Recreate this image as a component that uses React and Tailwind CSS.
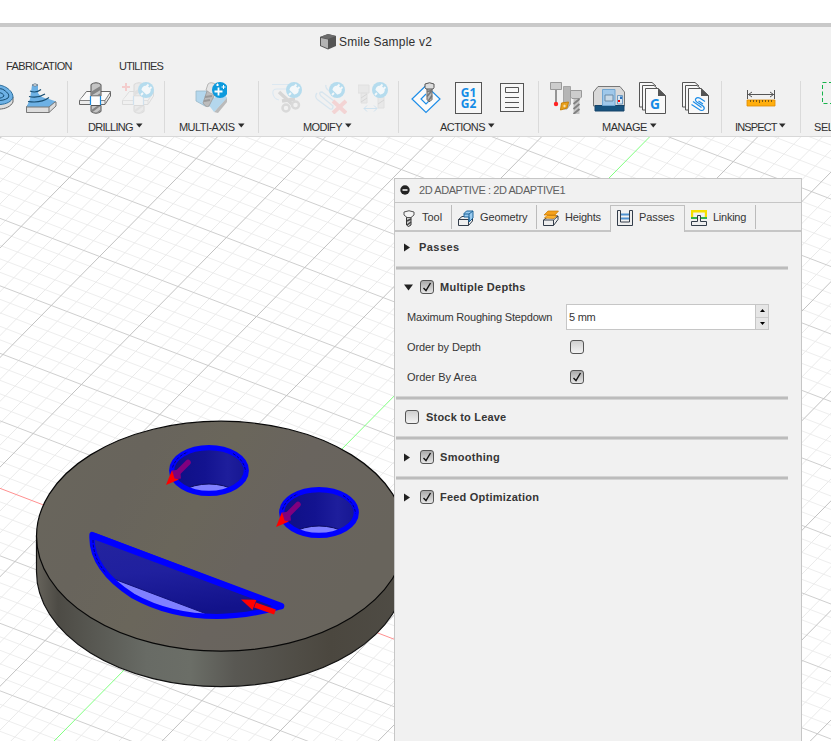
import React from 'react';

const range = (a, b) => Array.from({ length: b - a + 1 }, (_, i) => a + i);
const O = [220.1, 572.6];
const A = [78.43, 30.03];
const B = [-48.3, 49];

function GridLine({ at, along, across, stroke }) {
  const px = O[0] + across[0] * at;
  const py = O[1] + across[1] * at;
  return (
    <line x1={px - along[0] * 14} y1={py - along[1] * 14} x2={px + along[0] * 14} y2={py + along[1] * 14} stroke={stroke} strokeWidth="1" />
  );
}

function Eye({ x, y, id }) {
  return (
    <g transform={`translate(${x} ${y})`}>
      <clipPath id={id}><ellipse rx="37.5" ry="23" /></clipPath>
      <ellipse rx="37.5" ry="23" fill="url(#hole)" />
      <g clipPath={`url(#${id})`}>
        <ellipse cy="36.5" rx="37.5" ry="23" fill="#8080ff" stroke="#0b0b60" strokeWidth="1" />
      </g>
      <ellipse rx="37.3" ry="22.9" fill="none" stroke="#0000ff" strokeWidth="5.2" />
      <path d="M-36.5 -3C-34-11-28-16-21-18.5M24-17C32-12 36-6 36.500 1" fill="none" stroke="#000060" strokeWidth=".8" strokeDasharray="3 1.500" />
      <path d="M-21-8L-33 4" stroke="#80007f" strokeWidth="5.500" strokeLinecap="round" />
      <path d="M-37 0L-29-1L-28 8L-35 9Z" fill="#80007f" />
      <path d="M-43 14.500L-37-.5L-34.500 8L-30 9Z" fill="#ff0000" />
    </g>
  );
}

const MOUTH = 'M92 534.500C90.500 560 108 580 133 596C160 611 190 616.500 217 616.500C243 616.500 263 612 281.500 606.500Z';

function Scene() {
  return (
    <svg className="absolute inset-0" width="831" height="604" viewBox="0 137 831 604">
      <defs>
        <linearGradient id="side" gradientUnits="userSpaceOnUse" x1="36" y1="0" x2="404" y2="0">
          <stop offset="0" stopColor="#67645c" /><stop offset=".06" stopColor="#4d4b45" />
          <stop offset=".15" stopColor="#575751" /><stop offset=".3" stopColor="#686b65" />
          <stop offset=".42" stopColor="#6b6e67" /><stop offset=".54" stopColor="#595853" />
          <stop offset=".8" stopColor="#4b473f" /><stop offset="1" stopColor="#4f4c45" />
        </linearGradient>
        <linearGradient id="top" x1="0" y1="0" x2="1" y2=".35">
          <stop offset="0" stopColor="#69665c" /><stop offset=".3" stopColor="#68645c" />
          <stop offset=".5" stopColor="#6a665b" /><stop offset=".7" stopColor="#69645e" /><stop offset="1" stopColor="#68645c" />
        </linearGradient>
        <linearGradient id="hole"><stop offset="0" stopColor="#0f0f85" /><stop offset=".45" stopColor="#131390" /><stop offset=".75" stopColor="#1e1e9c" /><stop offset="1" stopColor="#161692" /></linearGradient>
        <linearGradient id="smile" x1="0" y1="0" x2=".2" y2="1"><stop offset="0" stopColor="#24249f" /><stop offset=".5" stopColor="#20209e" /><stop offset="1" stopColor="#12128a" /></linearGradient>
        <clipPath id="mouth"><path d={MOUTH} /></clipPath>
      </defs>
      <rect y="137" width="831" height="604" fill="#fff" />
      {range(-65, 65).filter((i) => i % 5).map((i) => <GridLine key={i} at={i / 5} along={A} across={B} stroke="#eeeeee" />)}
      {range(-65, 65).filter((i) => i % 5).map((i) => <GridLine key={i} at={i / 5} along={B} across={A} stroke="#eaeaea" />)}
      {range(-13, 13).map((i) => <GridLine key={i} at={i} along={A} across={B} stroke={i ? '#cfcfcf' : '#ff9090'} />)}
      {range(-13, 13).map((i) => <GridLine key={i} at={i} along={B} across={A} stroke={i ? '#c2c2c2' : '#80ff80'} />)}
      <path d="M36.500 536.200V571.700A184.500 115 0 0 0 405.500 571.700V536.200Z" fill="url(#side)" stroke="#111" strokeWidth="1.200" />
      <ellipse cx="221" cy="536.200" rx="184.500" ry="115" fill="url(#top)" stroke="#080808" strokeWidth="1.200" />
      <Eye id="eyeA" x={209} y={470.500} />
      <Eye id="eyeB" x={319} y={512.500} />
      <path d={MOUTH} fill="url(#smile)" />
      <path d="M110 577.500L212 616V640H90Z" clipPath="url(#mouth)" fill="#8080ff" stroke="#10107a" />
      <path d={MOUTH} fill="none" stroke="#0000ff" strokeWidth="5.200" strokeLinejoin="round" />
      <path d="M94 536L281 606" stroke="#0000ff" strokeWidth="6.500" strokeLinecap="round" />
      <path d="M93 540C93 553 98 564 106 573" fill="none" stroke="#000060" strokeWidth=".8" strokeDasharray="3 1.500" />
      <path d="M241 599.500L256.500 599.800L252.500 610Z" fill="#ff0000" />
      <path d="M255 605L275 612" stroke="#ff0000" strokeWidth="5.500" />
    </svg>
  );
}

const Icon = ({ children, faded }) => (
  <svg className={faded ? 'block shrink-0 opacity-15' : 'block shrink-0'} width="32" height="32" viewBox="0 0 32 32" fill="none">{children}</svg>
);

const Plug = ({ x, y }) => (
  <g transform={`translate(${x} ${y})`}>
    <circle r="8" fill="#b5dcee" />
    <path d="M-5 5L-3 3M-3.500-.5L.5 3.500C3 3 4.500 1 3.500-.8L1-3.500C-1-4-3-2.500-3.500-.5ZM0-3L2.500-5.500M3-.5L5.500-3" fill="#f4f8fa" stroke="#f4f8fa" strokeWidth="1.900" />
  </g>
);

const Screw = ({ x = 0, y = 0, w = 8, h = 24 }) => (
  <g transform={`translate(${x} ${y})`}>
    <path d={`M1 6H${w - 1}V${h - 2}L${w - 3} ${h}H3L1 ${h - 2}Z`} fill="#bbb" stroke="#666" />
    <path d={`M1 ${h - 10}L${w - 1} 8M1 ${h - 5}L${w - 1} ${h - 11}M2 ${h}L${w - 1} ${h - 6}`} stroke="#777" strokeWidth="1.500" />
    <path d={`M-1 1.500Q${w / 2}-1 ${w + 1} 1.500V5L${w} 6.500H0L-1 5Z`} fill="#ddd" stroke="#555" />
  </g>
);

const PocketIcon = () => (
  <Icon>
    <path d="M2 15V20C8 30 27 29 31 20V15Z" fill="#ddd" stroke="#666" />
    <path d="M1 15C3 5 12 2 17 3C25 4 31 10 31 15C29 24 8 26 1 15Z" fill="#6db1e5" stroke="#2c6f9e" />
    <path d="M6 14C9 7 18 5 22 8C26 11 28 13 26 16C20 20 10 19 6 14ZM11 14C14 9 21 10 22 14C19 17 14 17 11 14Z" stroke="#164c70" />
  </Icon>
);
const SteepIcon = () => (
  <Icon>
    <path d="M1.500 24.500L7 20H31V24L24 30.500H1.500Z" fill="#ddd" stroke="#777" />
    <path d="M2 24L5 17L7 3Q10 .5 13 3V11Q16 16 24 17L31 19.500L24 25H2Z" fill="#6db1e5" />
    <path d="M7 3Q10 .5 13 3Q10 5.500 7 3Z" fill="#e8eef2" stroke="#567" strokeWidth=".7" />
    <path d="M5 9Q11 11.500 16 7.500M4 14.500Q13 16.500 20 12M3 19.500Q16 21.500 24 15.500" stroke="#164c70" strokeWidth="1.100" />
    <path d="M1.500 25H24V30.500M24 25L30.500 19.500" stroke="#777" />
  </Icon>
);
const DrillShape = () => (
  <>
    <path d="M7.500 9.500H31.500V14L26 22.500H.5V18.500Z" fill="#ececec" stroke="#666" />
    <path d="M8 10H31L25.500 18H1Z" fill="#fafafa" />
    <path d="M.5 18.500H26L31.500 10M26 18.500V22" stroke="#777" strokeWidth=".9" />
    <path d="M12 2.500Q17-1 22 2.500V14H12Z" fill="#c4c4c4" stroke="#555" />
    <path d="M12.500 9.500L21.500 4V8L12.500 13.500ZM17 14L21.500 11V14Z" fill="#858585" />
    <path d="M12 14.500H22V23H12Z" fill="#fff" />
    <path d="M11.500 14V23M21.500 14V23" stroke="#1a8be0" strokeWidth="1.200" />
    <path d="M12 23.500H22V29.500Q17 33 12 29.500Z" fill="#c4c4c4" stroke="#555" />
    <path d="M12.500 28L18 24H21.500L13 30.500ZM17 31L21.500 27.500V29.500Z" fill="#858585" />
  </>
);
const MultiAxisIcon = () => (
  <Icon>
    <path d="M1 9H13L20 18V24H10L1 19Z" fill="#b4d7ed" stroke="#9bb9c9" strokeWidth=".8" />
    <path d="M19 30L32 15V20L23 31Z" fill="#bbb" /><path d="M13 22L27 8L32 16L19 30Z" fill="#b4d7ed" />
    <path d="M12 9L20 12L14 24Q11 26 8 21Z" fill="#bcbcbc" stroke="#999" strokeWidth=".8" />
    <path d="M10 15L17 14M9 19L15 18" stroke="#999" strokeWidth="2" />
    <path d="M13 2Q16-1 22 3L20 13L15 11L11 8Z" fill="#e4e4e4" stroke="#aaa" strokeWidth=".8" />
    <circle cx="25" cy="8" r="8" fill="#0c9add" />
    <path d="M23.500 5.500V13.500M19.500 9.500H27.500" stroke="#fff" strokeWidth="1.800" />
    <path d="M28.500 3V7M26.500 5H30.500M22.500 1.500V4M21 3H24" stroke="#fff" />
  </Icon>
);
const TrimIcon = () => (
  <Icon>
    <path d="M0 2.500H16M16 7H5Q0 7 1 12T7 18" stroke="#dce8f1" strokeWidth="1.200" />
    <path d="M7 10L20 22M10 19L23 17" stroke="#d6d6d6" strokeWidth="3.500" />
    <circle cx="14" cy="26" r="3.500" stroke="#d9d9d9" strokeWidth="2.500" /><circle cx="23.500" cy="23" r="3.500" stroke="#d9d9d9" strokeWidth="2.500" />
    <Plug x={22} y={8} />
  </Icon>
);
const DeletePassIcon = () => (
  <Icon>
    <path d="M11 3Q10 6 14 9L18 13M2 11Q-1 15 3 18L15 27Q18 28 18 24L6 14Q3 10 7 10L19 19" stroke="#d8e5ee" strokeWidth="1.300" />
    <path d="M18 19L31 31M31 19L18 31" stroke="#f3d4d4" strokeWidth="4" />
    <Plug x={22} y={8} />
  </Icon>
);
const ReplaceToolIcon = () => (
  <Icon>
    <path d="M0 3H11V11H0ZM3 11H9V21H3ZM20 15H26V26H20Z" fill="#e8e8e8" stroke="#e0e0e0" />
    <path d="M3 16L9 12M3 20L9 16M20 22L26 18" stroke="#d6d6d6" />
    <path d="M6 26.500H19M9 23.500L6 26.500L9 29.500M16 23.500L19 26.500L16 29.500" stroke="#cfe2ef" />
    <Plug x={22} y={8} />
  </Icon>
);
const SimulateIcon = () => (
  <Icon>
    <path d="M16 3.500L2 17L16 30.500L30 17Z" stroke="#1d8de8" strokeWidth="1.200" fill="#fafafa" />
    <path d="M16 12L11 17L16 22L21 17" stroke="#1d8de8" strokeWidth="1.200" />
    <Screw x={16} y={.5} w={7} h={19} />
  </Icon>
);
const PostIcon = () => (
  <Icon>
    <rect x="2.500" y=".5" width="26" height="31" fill="#f7f7f7" stroke="#555" />
    <text x="15.500" y="15" textAnchor="middle" className="fill-[#148be6] font-['Noto_Sans',sans-serif] text-[12px] font-bold" textLength="15.500" lengthAdjust="spacingAndGlyphs">G1</text>
    <text x="15.500" y="26" textAnchor="middle" className="fill-[#148be6] font-['Noto_Sans',sans-serif] text-[12px] font-bold" textLength="15.500" lengthAdjust="spacingAndGlyphs">G2</text>
  </Icon>
);
const SetupSheetIcon = () => (
  <Icon>
    <rect x="4.500" y="1.500" width="23" height="28" fill="#f7f7f7" stroke="#555" />
    <path d="M9.500 5.500H22.500V10.500H9.500ZM9 15.500H23M9 20.500H23M9 25.500H23" stroke="#555" />
  </Icon>
);
const ToolLibraryIcon = () => (
  <Icon>
    <path d="M13.500 4.500H20.500V22L17 27H13.500Z" fill="#b5b5b5" stroke="#a5a5a5" />
    <path d="M.5 .5H11.500V7.500H.5Z" fill="#ccc" stroke="#999" /><path d="M6 8V20" stroke="#777" strokeWidth="1.500" /><circle cx="6" cy="22" r="2.200" fill="#f22" />
    <path d="M11.500 21L18.500 20L17 26L10.500 28Z" fill="#e9a11e" stroke="#c9820a" /><path d="M13 24L14.500 22.500L16 24L14.500 25.500Z" fill="#f6dfb0" />
    <path d="M20.500 8.500H31.500V15L30 16.500H22L20.500 15Z" fill="#ccc" stroke="#999" />
    <path d="M23.500 17H29.500V32H23.500Z" fill="#c4c4c4" /><path d="M23.500 22L29.500 17M23.500 27L29.500 22M23.500 32L29.500 27" stroke="#808080" strokeWidth="1.800" />
  </Icon>
);
const MachineIcon = () => (
  <Icon>
    <path d="M.5 24V10L5 4.500H27L31.500 10V24Z" fill="#d9d9d9" stroke="#777" />
    <path d="M2 23.500H31V29H2Z" fill="#17537f" stroke="#16456a" />
    <path d="M9.500 7.500H22V23.500H9.500Z" fill="#9fc8ea" stroke="#70a6d2" /><path d="M12 13H20V19H12Z" fill="#c7d9e7" stroke="#6b8ba7" />
    <path d="M24.500 13.500H29.500V22H24.500Z" fill="#d9e8f4" stroke="#6e9ac0" /><path d="M25 18H27V20H25Z" fill="red" /><path d="M27 14.500H29V17H27Z" fill="#2b72c0" />
  </Icon>
);
const Pages = ({ children }) => (
  <Icon>
    <path d="M3.500 25V.5H16L20 4M6.500 28V3.500H18L22 7M3.500 25H6.500M6.500 28H9.500" stroke="#555" fill="#f7f7f7" />
    <path d="M9.500 6.500H22L29.500 13.500V31.500H9.500Z" fill="#f9f9f9" stroke="#555" /><path d="M22 6V14H30Z" fill="#555" />
    {children}
  </Icon>
);
const MeasureIcon = () => (
  <Icon>
    <path d="M2.500 8V17M29.500 8V17M3 12.500H29M7 10L3.500 12.500L7 15M25 10L28.500 12.500L25 15" stroke="#555" />
    <path d="M2 18H30V24H2Z" fill="#ffae0d" stroke="#e08a00" strokeWidth=".8" />
    <path d="M5.500 18V20M8.500 18V20M11.500 18V20M14.500 18V21M17.500 18V20M20.500 18V20M23.500 18V20M26.500 18V20" stroke="#7c5a14" />
  </Icon>
);

function Group({ w, icons, iconClass, label, labelClass, textClass, last }) {
  return (
    <div className={`flex shrink-0 ${w}`}>
      <div className="min-w-0 flex-1">
        <div className={`flex h-8 gap-[11px] ${iconClass}`}>{icons}</div>
        <div className={`mt-[5px] flex h-4 items-center whitespace-nowrap text-[11px] leading-4 ${labelClass}`}>
          {label && <span className={`shrink-0 ${textClass}`}>{label}</span>}
          {label && !last && <svg className="mb-[3px] shrink-0" width="7" height="5"><path d="M0 .5H6.500L3.250 4.500Z" fill="#2b2b2b" /></svg>}
        </div>
      </div>
      {!last && <div className="mt-[-1px] h-[52px] w-[1.500px] bg-[#dadada]" />}
    </div>
  );
}

function Check({ on }) {
  return (
    <span className={`block size-[14px] shrink-0 rounded-[3px] border border-[#555] bg-linear-to-b ${on ? 'from-[#aaa] to-[#e6e6e6]' : 'from-[#cfcfcf] to-[#f3f3f3]'}`}>
      {on && <svg className="block" width="12" height="12" fill="none"><path d="M2.500 7L5 9.500L9.500 2" stroke="#111" strokeWidth="1.400" /></svg>}
    </span>
  );
}
const Right = () => <svg className="shrink-0" width="10" height="9"><path d="M0 .5L6 4.500L0 8.500Z" fill="#222" /></svg>;
const Down = () => <svg className="shrink-0" width="10" height="9"><path d="M0 1.500H9L4.500 7.500Z" fill="#222" /></svg>;
const Divider = () => <div className="mr-[13px] ml-px h-1 border-y border-[#d4d4d4] bg-[#bcbcbc]" />;

function Section({ arrow, check, label, textClass }) {
  return (
    <div className="flex h-9 items-center pb-[2px] pl-[9px] text-[11px] font-bold">
      {arrow && <div className="w-4">{arrow === 'down' ? <Down /> : <Right />}</div>}
      {check !== undefined && <div className={arrow ? 'w-5' : 'mr-[7px] ml-px'}><Check on={check} /></div>}
      <span className={`py-px leading-4 ${textClass}`}>{label}</span>
    </div>
  );
}

const TabIcon = ({ children }) => <svg className="mt-[5px] shrink-0" width="16" height="17" viewBox="0 0 16 17" fill="none">{children}</svg>;

function Tab({ cls, icon, label, textClass }) {
  return (
    <div className={`flex shrink-0 items-start text-[11px] ${cls}`}>
      <TabIcon>{icon}</TabIcon>
      <span className={`mt-1 leading-4 ${textClass}`}>{label}</span>
    </div>
  );
}

function Panel() {
  return (
    <aside className="absolute top-[41px] left-[394px] h-[570px] w-[408px] overflow-hidden border border-[#c6c6c6] bg-[#f1f1f1] text-[#363636]">
      <header className="flex h-[24px] items-center border-b border-[#c6c6c6] pb-px pl-[5px] text-[11px] leading-4 text-[#606060]">
        <svg width="10" height="10"><circle cx="5" cy="5" r="4.700" fill="#222" /><path d="M2.500 5H7.500" stroke="#fff" strokeWidth="1.500" /></svg>
        <span className="ml-[9px] tracking-[-0.420px] whitespace-nowrap">2D ADAPTIVE : 2D ADAPTIVE1</span>
      </header>
      <nav className="flex h-[29px] items-stretch">
        <div className="flex items-start border-b-2 border-[#c6c6c6] pt-[2px]">
          <Tab cls="h-6 w-[57px] border-r border-[#bbb] pl-[7px]" label="Tool" textClass="ml-[4px]" icon={<>
            <path d="M4.500 7H9V15L6.500 16.500L4.500 15Z" fill="#ccc" stroke="#333" /><path d="M5 11L9 9M5 15L9 12" stroke="#444" strokeWidth="1.500" />
            <path d="M2 2Q7-.5 12 2V5L9 7.500H5L2 5Z" fill="#f4f4f4" stroke="#555" /></>} />
          <Tab cls="h-6 w-[85px] border-r border-[#bbb] pl-[6px]" label="Geometry" textClass="ml-[6px] tracking-[-0.100px]" icon={<>
            <path d="M.5 9.500L4 6.500H11L14.500 8V11L10.500 15.500H.5Z" fill="#eee" stroke="#333d4a" /><path d="M.5 9.500H10.500V15.500" stroke="#333d4a" />
            <path d="M6 3.500L8.500 1H15V8L11 12V7H6Z" fill="#9acbf0" stroke="#1e6499" /><path d="M6 4H11L15 1M11 4V11" stroke="#1e6499" /></>} />
          <Tab cls="h-6 w-[73px] pl-[6px]" label="Heights" textClass="ml-[6px] tracking-[-0.200px]" icon={<>
            <path d="M.5 10L6 6H15V9.500L10.500 15.500H.5Z" fill="#eee" stroke="#333d4a" /><path d="M.5 10H10.500V15.500M10.500 10L15 6" stroke="#333d4a" />
            <path d="M1 5L5 1H15.500L12 5Z" fill="#f5a11c" stroke="#c97800" strokeWidth=".7" /><path d="M1.500 8L4 5.500H14L11 8.500Z" fill="#ffb32d" stroke="#c97800" strokeWidth=".7" /></>} />
        </div>
        <div className="mt-[2px] w-[75px] border-x border-t border-[#c0c0c0]">
          <Tab cls="-mt-px h-[25px] pl-[6px]" label="Passes" textClass="ml-[6px] tracking-[-0.100px]" icon={<>
            <path d="M.5 .5H3.500V12H12.500V.5H15.500V15.500H.5Z" fill="#eee" stroke="#333d4a" /><path d="M4 4.500H12M4 8.500H12" stroke="#4f91d0" strokeWidth="2" /></>} />
        </div>
        <div className="flex flex-1 items-start border-b-2 border-[#c6c6c6] pt-[2px]">
          <Tab cls="h-6 w-[71px] border-r border-[#bbb] pl-[6px]" label="Linking" textClass="ml-[6px] tracking-[-0.250px]" icon={<>
            <path d="M1 8V1.200H15V8" stroke="#f5df00" strokeWidth="2.400" /><path d="M0 8H6M10 8H16" stroke="#35b24a" strokeWidth="2" />
            <path d="M.5 11.500H6.500V5.500H9.500V11.500H15.500V15.500H.5Z" fill="#eee" stroke="#333d4a" /></>} />
        </div>
      </nav>
      <div>
        <div className="flex h-[34px] items-center pb-1 pl-[9px] text-[11px] leading-4 font-bold"><div className="w-[15px]"><Right /></div><span className="tracking-[0.450px]">Passes</span></div>
        <Divider />
        <Section arrow="down" check={true} label="Multiple Depths" textClass="tracking-[0.250px]" />
        <div className="flex h-[22px] items-center pl-3 text-[11px] leading-4">
          <span className="w-[159px] tracking-[-0.180px] whitespace-nowrap">Maximum Roughing Stepdown</span>
          <div className="flex h-[26px] w-[203px] shrink-0 border border-[#c6c6c6] bg-white">
            <span className="flex-1 pl-[2px] leading-6 tracking-[-0.250px]">5 mm</span>
            <div className="flex w-[13px] flex-col border-l border-[#c6c6c6] bg-[#e6e6e6]">
              <span className="flex flex-1 items-center justify-center border-b border-[#ccc]"><svg width="5" height="3"><path d="M0 3H5L2.500 0Z" fill="#000" /></svg></span>
              <span className="flex flex-1 items-center justify-center"><svg width="5" height="3"><path d="M0 0H5L2.500 3Z" fill="#000" /></svg></span>
            </div>
          </div>
        </div>
        <div className="mt-1 flex h-[30px] items-center pl-3 text-[11px] leading-4"><span className="w-[163px] tracking-[-0.100px]">Order by Depth</span><Check on={false} /></div>
        <div className="mb-1 flex h-[30px] items-center pl-3 text-[11px] leading-4"><span className="w-[163px]">Order By Area</span><Check on={true} /></div>
        <Divider />
        <Section check={false} label="Stock to Leave" textClass="tracking-[0.200px]" />
        <Divider />
        <Section arrow="right" check={true} label="Smoothing" textClass="tracking-[0.300px]" />
        <Divider />
        <Section arrow="right" check={true} label="Feed Optimization" textClass="tracking-[0.220px]" />
      </div>
    </aside>
  );
}

export default function App() {
  return (
    <div className="flex h-[741px] w-[831px] flex-col overflow-hidden bg-white font-['Liberation_Sans',Arial,sans-serif] text-[#303030]">
      <div className="h-[23px] shrink-0" />
      <header className="h-[114px] shrink-0 overflow-hidden border-t-4 border-b border-t-[#c9c9c9] border-b-[#d8d8d8] bg-[#f1f1f1]">
        <div className="flex h-[29px] items-center pl-[320px]">
          <svg width="16" height="16"><path d="M0 3L8 0L16 2V12L8 15.500L0 12Z" fill="#555" /><path d="M1 4L8 5.500V14.500L1 11.500Z" fill="#b4b4b4" /><path d="M0 3L8 0L16 2L8 5Z" fill="#6c6c6c" /></svg>
          <h1 className="ml-[3px] text-[12px] tracking-[0.200px] whitespace-nowrap">Smile Sample v2</h1>
        </div>
        <div className="flex h-[26px] items-start pt-[2px] pl-[6px] text-[11px] leading-4">
          <span className="w-[113px] tracking-[-0.600px]">FABRICATION</span><span className="tracking-[-0.800px]">UTILITIES</span>
        </div>
        <div className="flex">
          <Group w="w-[68px]" iconClass="-ml-[18px]" icons={<><PocketIcon /><SteepIcon /></>} />
          <Group w="w-[97px]" iconClass="pl-[11px]" labelClass="pl-5" textClass="w-[48px] tracking-[-0.750px]" label="DRILLING" icons={<><Icon><DrillShape /></Icon>
            <div className="relative"><Icon faded><DrillShape /></Icon><svg className="absolute inset-0" width="32" height="32"><path d="M4 1V9M0 5H8" stroke="#f3cccc" strokeWidth="2" /><Plug x={24} y={8} /></svg></div></>} />
          <Group w="w-[94px]" iconClass="pl-[30px]" labelClass="pl-[14px]" textClass="w-[59px] tracking-[-0.550px]" label="MULTI-AXIS" icons={<MultiAxisIcon />} />
          <Group w="w-[140px]" iconClass="pl-[13px]" labelClass="pl-[44px]" textClass="w-[42px] tracking-[-0.650px]" label="MODIFY" icons={<><TrimIcon /><DeletePassIcon /><ReplaceToolIcon /></>} />
          <Group w="w-[140px]" iconClass="pl-[11px]" labelClass="pl-[41px]" textClass="w-[48px] tracking-[-0.550px]" label="ACTIONS" icons={<><SimulateIcon /><PostIcon /><SetupSheetIcon /></>} />
          <Group w="w-[183px]" iconClass="pl-[11px]" labelClass="pl-[63px]" textClass="w-[48px] tracking-[-0.450px]" label="MANAGE" icons={<><ToolLibraryIcon /><MachineIcon />
            <Pages><text x="14" y="27" className="fill-[#148be6] font-['Noto_Sans',sans-serif] text-[14px] font-bold" textLength="10" lengthAdjust="spacingAndGlyphs">G</text></Pages>
            <Pages><path d="M26 19.500L21 16.200Q18.500 14.800 17 16.500T17.800 20L24 24Q26 25.800 24.800 27.500T21 28L12.500 22.500M24 22L19.500 19M14 19.500L22.500 25.500" stroke="#1d8de8" strokeWidth="1.200" /></Pages></>} />
          <Group w="w-[79px]" iconClass="pl-[23px]" labelClass="pl-[13px]" textClass="w-[44px] tracking-[-0.850px]" label="INSPECT" icons={<MeasureIcon />} />
          <Group w="w-[40px]" last iconClass="pl-[21px]" labelClass="pl-[13px]" textClass="tracking-[-0.400px]" label="SELECT" icons={<Icon><rect x=".5" y=".5" width="31" height="21" stroke="#18b34b" strokeDasharray="4 2.500" /></Icon>} />
        </div>
      </header>
      <main className="relative flex-1 overflow-hidden">
        <Scene />
        <Panel />
      </main>
    </div>
  );
}
